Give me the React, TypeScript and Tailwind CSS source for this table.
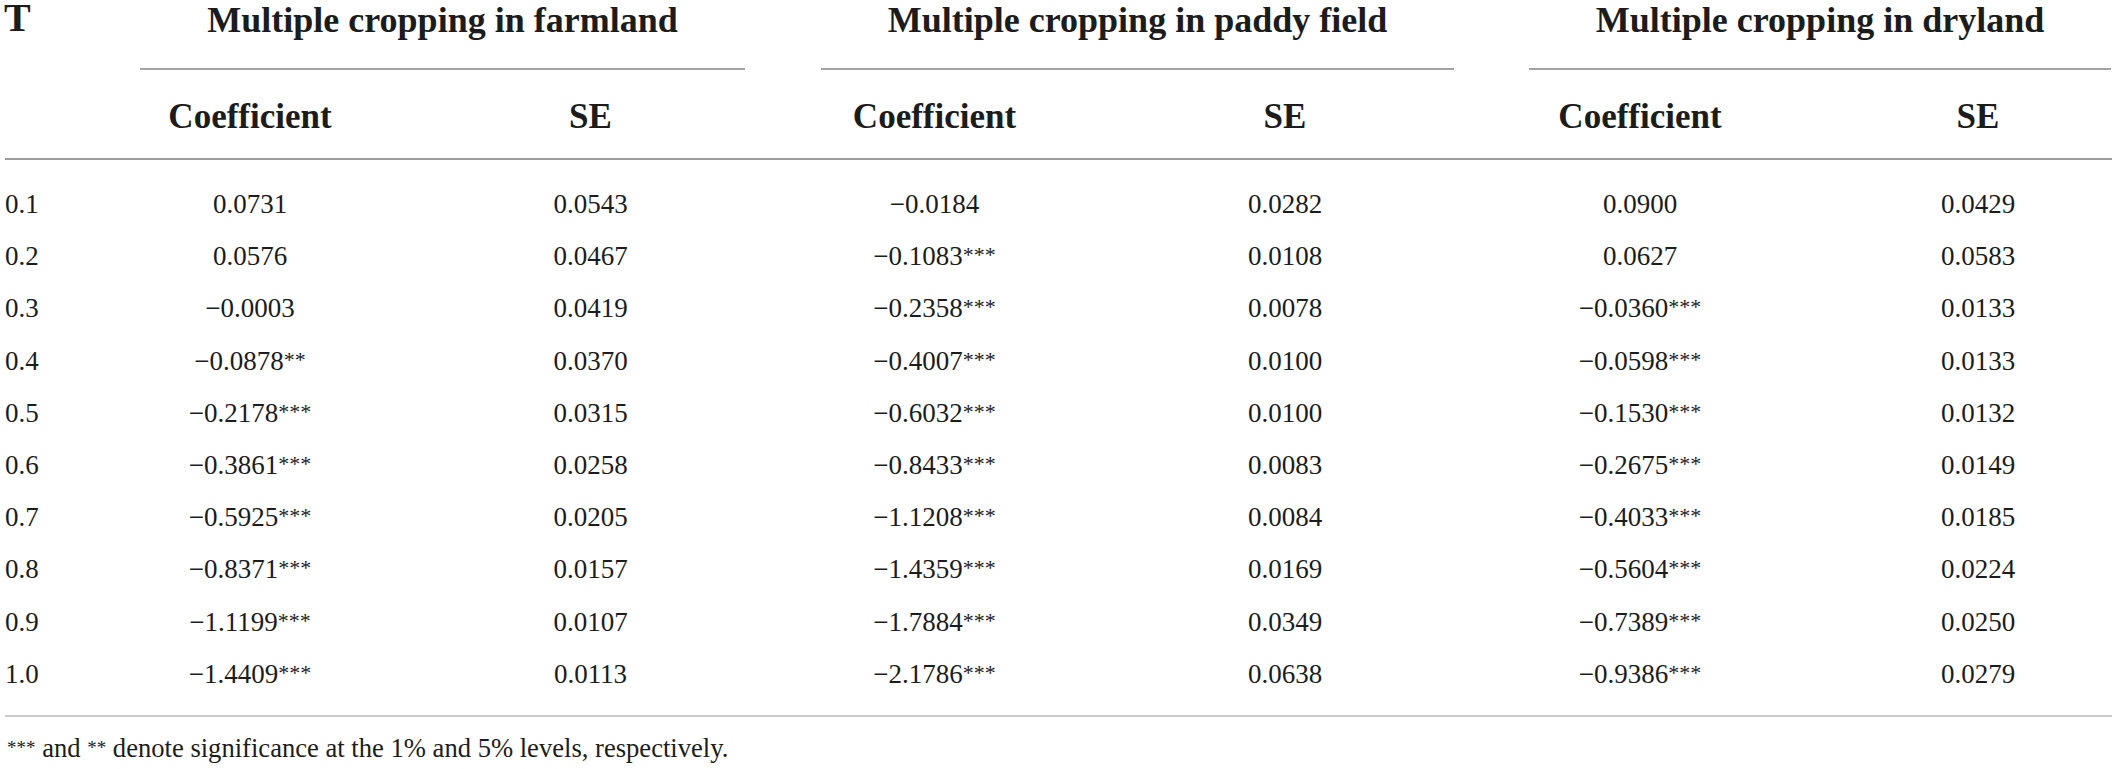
const rows: [string, string, string, string, string, string, string][] = [
  ["0.1", "0.0731", "0.0543", "−0.0184", "0.0282", "0.0900", "0.0429"],
  ["0.2", "0.0576", "0.0467", "−0.1083***", "0.0108", "0.0627", "0.0583"],
  ["0.3", "−0.0003", "0.0419", "−0.2358***", "0.0078", "−0.0360***", "0.0133"],
  ["0.4", "−0.0878**", "0.0370", "−0.4007***", "0.0100", "−0.0598***", "0.0133"],
  ["0.5", "−0.2178***", "0.0315", "−0.6032***", "0.0100", "−0.1530***", "0.0132"],
  ["0.6", "−0.3861***", "0.0258", "−0.8433***", "0.0083", "−0.2675***", "0.0149"],
  ["0.7", "−0.5925***", "0.0205", "−1.1208***", "0.0084", "−0.4033***", "0.0185"],
  ["0.8", "−0.8371***", "0.0157", "−1.4359***", "0.0169", "−0.5604***", "0.0224"],
  ["0.9", "−1.1199***", "0.0107", "−1.7884***", "0.0349", "−0.7389***", "0.0250"],
  ["1.0", "−1.4409***", "0.0113", "−2.1786***", "0.0638", "−0.9386***", "0.0279"],
];

const groups = [
  { title: "Multiple cropping in farmland", margin: "ml-[60px] mr-[16px]" },
  { title: "Multiple cropping in paddy field", margin: "ml-[60px] mr-[8px]" },
  { title: "Multiple cropping in dryland", margin: "ml-[67px] mr-[1px]" },
];

const cols = "grid grid-cols-[75px_340px_341px_347px_354px_356px_294px]";

function Value({ text }: { text: string }) {
  const stars = text.match(/\*+$/)?.[0] ?? "";
  const num = stars ? text.slice(0, -stars.length) : text;
  return (
    <span>
      {num}
      {stars && <span className="relative -top-[3px] text-[22px] leading-none">{stars}</span>}
    </span>
  );
}

export default function App() {
  return (
    <div className="w-[2117px] h-[769px] bg-white text-[#1c1c1c] font-['Liberation_Serif',serif] px-[5px] overflow-hidden">
      {/* group headers */}
      <div className={`${cols} pt-[3px]`}>
        <div className="font-bold text-[40px] leading-[36px] -mt-[3px] -ml-[1px]">T</div>
        {groups.map((g) => (
          <div key={g.title} className="col-span-2">
            <div
              className={`${g.margin} text-center font-bold text-[36px] leading-[35px] pb-[30px] border-b-2 border-[#a3a3a3]`}
            >
              {g.title}
            </div>
          </div>
        ))}
      </div>

      {/* sub headers */}
      <div className={`${cols} pt-[29px] pb-[24px] border-b-2 border-[#9c9c9c] font-bold text-[35px] leading-[35px]`}>
        <div />
        <div className="text-center">Coefficient</div>
        <div className="text-center">SE</div>
        <div className="text-center">Coefficient</div>
        <div className="text-center">SE</div>
        <div className="text-center">Coefficient</div>
        <div className="text-center pl-[26px]">SE</div>
      </div>

      {/* body */}
      <div className="pt-[18px] pb-[15px] border-b-2 border-[#cacaca] text-[27px] leading-[52px]">
        {rows.map((r) => (
          <div key={r[0]} className={`${cols} h-[52.2px]`}>
            <div>{r[0]}</div>
            <div className="text-center"><Value text={r[1]} /></div>
            <div className="text-center"><Value text={r[2]} /></div>
            <div className="text-center"><Value text={r[3]} /></div>
            <div className="text-center"><Value text={r[4]} /></div>
            <div className="text-center"><Value text={r[5]} /></div>
            <div className="text-center pl-[26px]"><Value text={r[6]} /></div>
          </div>
        ))}
      </div>

      <p className="pt-[18px] pl-[2px] text-[26.6px] leading-[26px]">
        <span className="relative -top-[3px] text-[19px] leading-none">***</span> and{" "}
        <span className="relative -top-[3px] text-[19px] leading-none">**</span> denote significance at the 1% and 5%
        levels, respectively.
      </p>
    </div>
  );
}
